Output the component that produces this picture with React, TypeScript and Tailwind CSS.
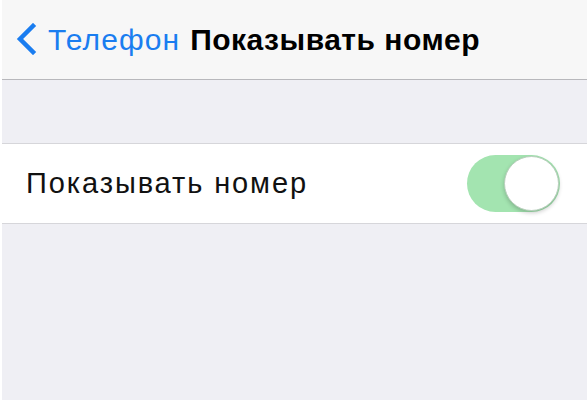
export default function App() {
  return (
    <div className="h-[402px] w-[588px] overflow-hidden bg-white pb-[2px] pl-[2px] pr-[1px] font-['Liberation_Sans',Arial,sans-serif]">
      <div className="flex h-full flex-col bg-[#efeff4]">
        {/* nav bar */}
        <div className="flex h-[80px] items-center border-b border-[#b8b8bc] bg-[#f7f7f7] pl-[12px]">
          <svg width="24" height="32" viewBox="0 0 24 32" className="mr-[10px] mb-[2px]">
            <path d="M19 3 L6 16 L19 29" fill="none" stroke="#1a7df0" strokeWidth="4.5" strokeLinecap="square" />
          </svg>
          <span className="text-[30px] tracking-[1.1px] text-[#1a7df0]">Телефон</span>
          <span className="ml-[10px] text-[30px] font-bold tracking-[0.5px] text-black">Показывать номер</span>
        </div>

        <div className="h-[63px]" />

        {/* settings row */}
        <div className="flex h-[81px] items-center justify-between border-y border-[#d6d6da] bg-white pl-[24px] pr-[27px]">
          <span className="text-[29px] tracking-[1.9px] text-[#111]">Показывать номер</span>
          <div className="flex h-[57px] w-[93px] items-center justify-end rounded-full bg-[#a3e4b0] p-[1px]">
            <div className="h-[55px] w-[55px] rounded-full border border-[#b9cfbd] bg-white shadow-[0_2px_4px_rgba(0,0,0,0.2)]" />
          </div>
        </div>

        <div className="flex-1" />
      </div>
    </div>
  );
}
